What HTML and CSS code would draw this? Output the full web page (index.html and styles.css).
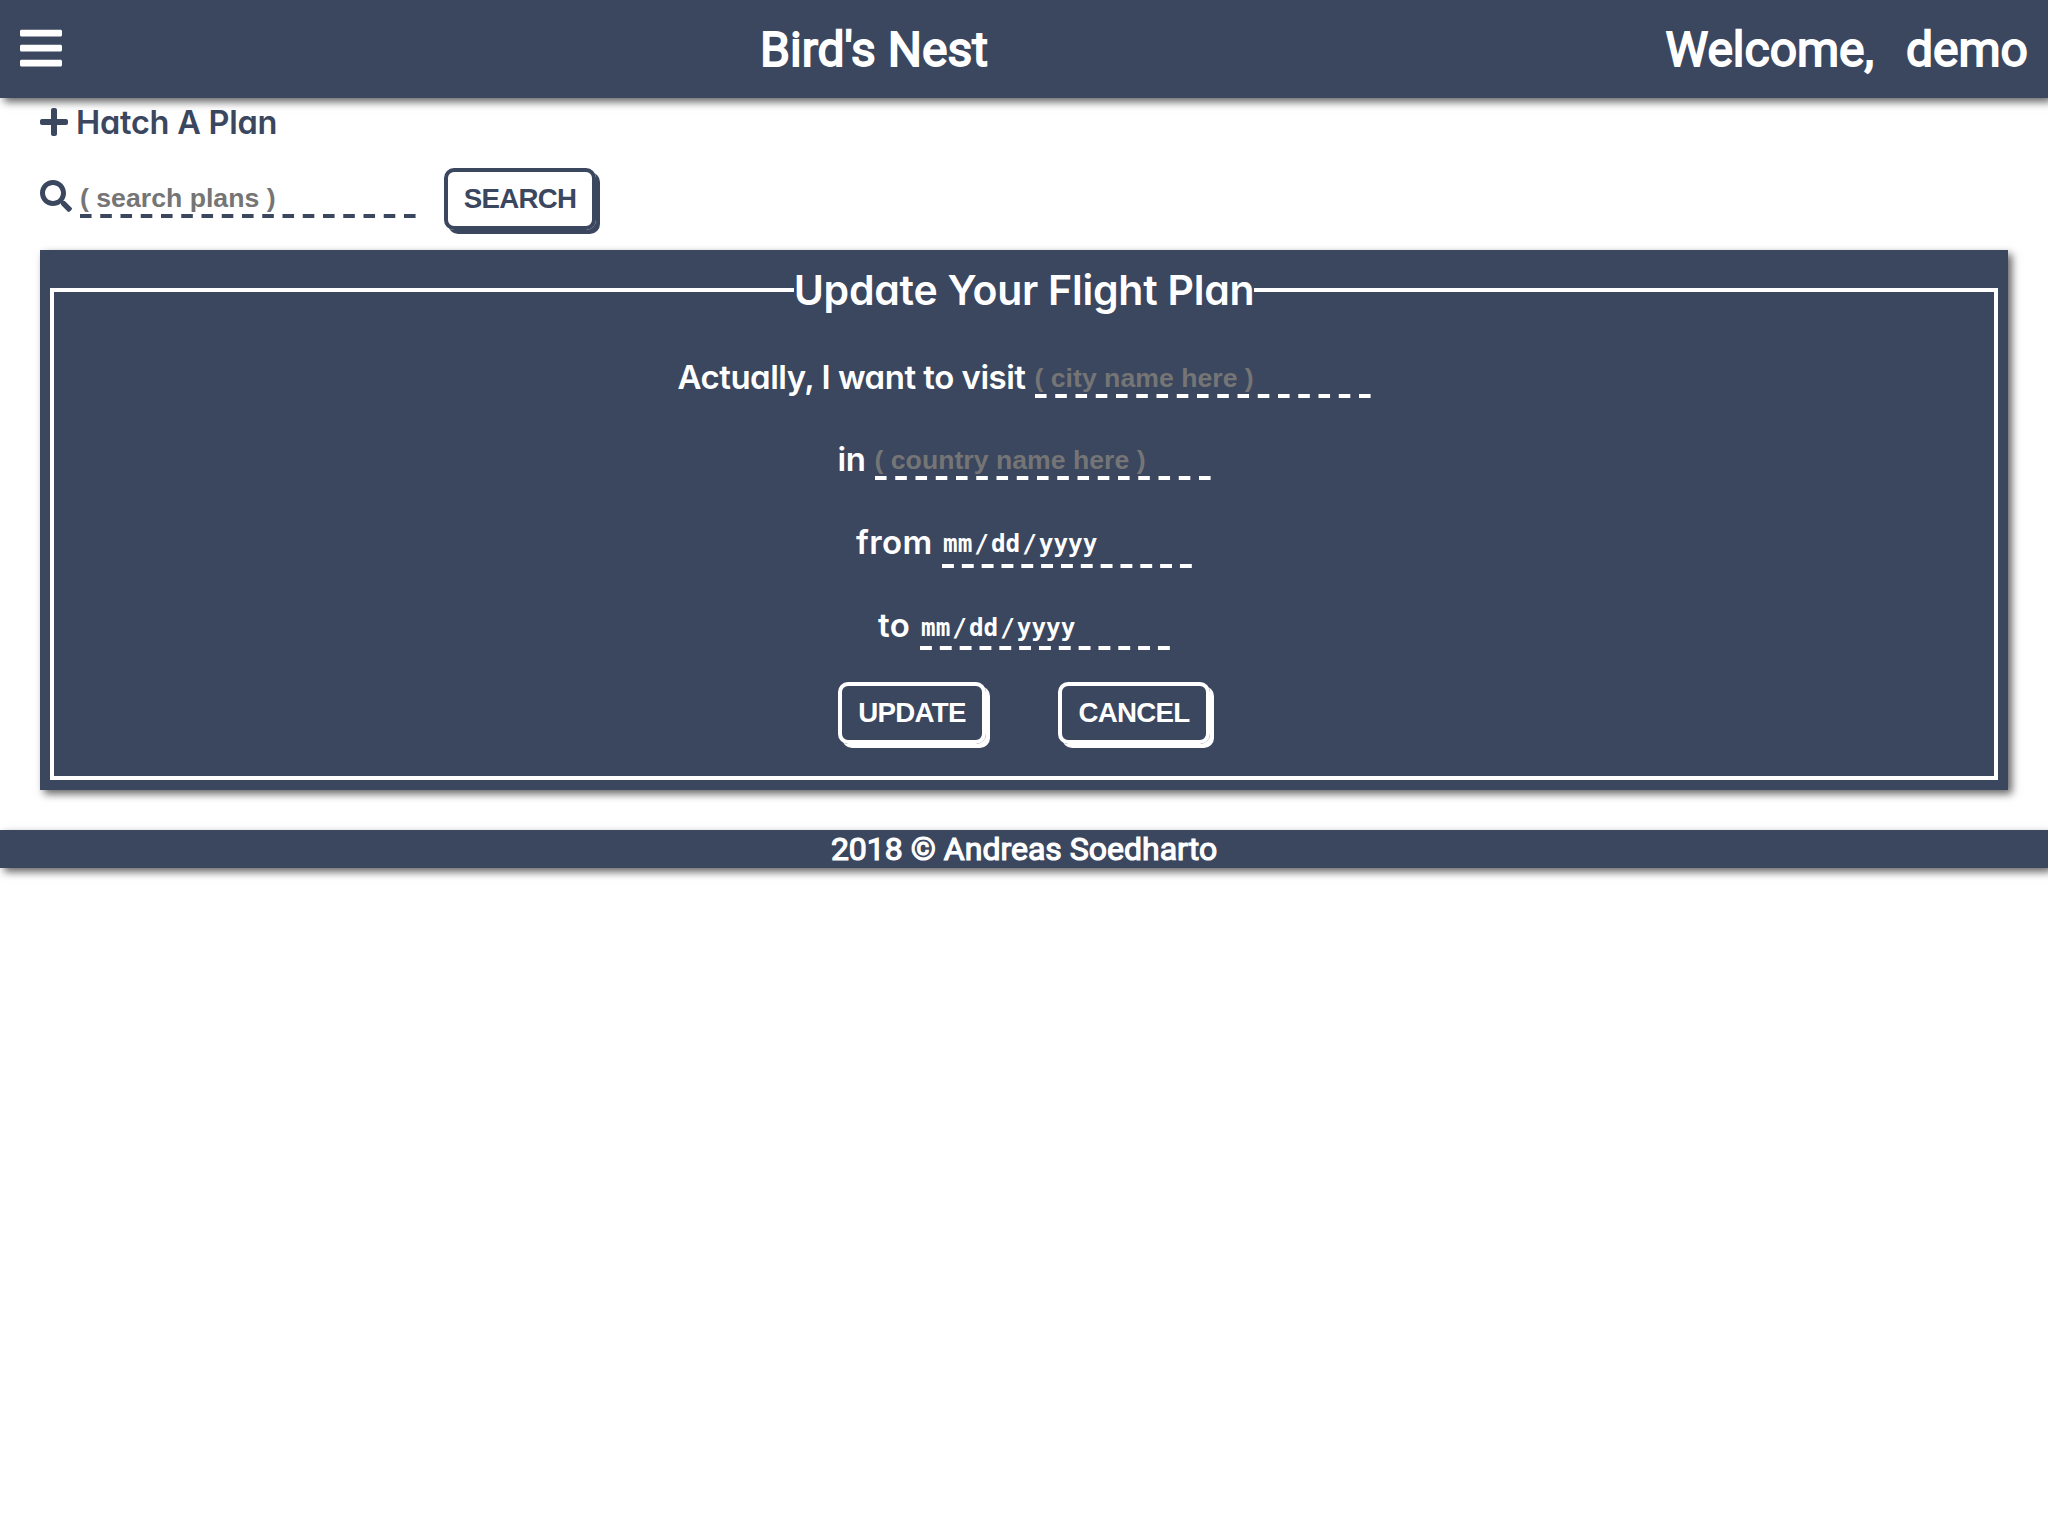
FILE: index.html
```html
<!DOCTYPE html>
<html lang="en-US">
<head>
<meta charset="utf-8">
<title>Bird's Nest</title>
<link rel="stylesheet" href="styles.css">
</head>
<body>
<header class="topbar">
  <svg class="menu" viewBox="0 0 448 512"><path d="M16 132h416c8.837 0 16-7.163 16-16V76c0-8.837-7.163-16-16-16H16C7.163 60 0 67.163 0 76v40c0 8.837 7.163 16 16 16zm0 160h416c8.837 0 16-7.163 16-16v-40c0-8.837-7.163-16-16-16H16c-8.837 0-16 7.163-16 16v40c0 8.837 7.163 16 16 16zm0 160h416c8.837 0 16-7.163 16-16v-40c0-8.837-7.163-16-16-16H16c-8.837 0-16 7.163-16 16v40c0 8.837 7.163 16 16 16z"/></svg>
  <h1 class="brand">Bird's Nest</h1>
  <div class="welcome"><span>Welcome,</span><span>demo</span></div>
</header>
<main class="content">
  <div class="hatch">
    <svg class="plus" viewBox="0 0 448 512"><path d="M416 208H272V64c0-17.67-14.33-32-32-32h-32c-17.67 0-32 14.33-32 32v144H32c-17.67 0-32 14.33-32 32v32c0 17.67 14.33 32 32 32h144v144c0 17.67 14.33 32 32 32h32c17.67 0 32-14.33 32-32V304h144c17.67 0 32-14.33 32-32v-32c0-17.67-14.33-32-32-32z"/></svg>
    <span class="hatch-text">Hatch A Plan</span>
  </div>
  <div class="search">
    <svg class="glass" viewBox="0 0 512 512"><path d="M505 442.7L405.3 343c-4.500-4.500-10.600-7-17-7H372c27.600-35.300 44-79.700 44-128C416 93.100 322.900 0 208 0S0 93.100 0 208s93.100 208 208 208c48.300 0 92.700-16.400 128-44v16.300c0 6.400 2.500 12.500 7 17l99.700 99.700c9.400 9.400 24.600 9.400 33.900 0l28.300-28.300c9.400-9.400 9.400-24.600.1-34zM208 336c-70.700 0-128-57.200-128-128 0-70.700 57.200-128 128-128 70.700 0 128 57.200 128 128 0 70.700-57.200 128-128 128z"/></svg>
    <input class="field" type="text" placeholder="( search plans )">
    <button class="btn">SEARCH</button>
  </div>
  <form class="panel">
    <fieldset class="plan">
      <legend class="legend">Update Your Flight Plan</legend>
      <div class="row row-city"><label class="label">Actually, I want to visit</label><input class="field" type="text" placeholder="( city name here )"></div>
      <div class="row row-country"><label class="label">in</label><input class="field" type="text" placeholder="( country name here )"></div>
      <div class="row row-from"><label class="label">from</label><input class="field date" type="date"></div>
      <div class="row row-to"><label class="label">to</label><input class="field date" type="date"></div>
      <div class="actions"><button class="btn btn-update" type="button">UPDATE</button><button class="btn" type="button">CANCEL</button></div>
    </fieldset>
  </form>
</main>
<footer class="footer">2018 © Andreas Soedharto</footer>
</body>
</html>
```
FILE: styles.css
```css
* { box-sizing: border-box; }
body { margin: 0; min-height: 100vh; background: #fff; color: #3b465f; }
svg { fill: currentColor; flex: none; }

.topbar {
  display: grid;
  grid-template-columns: 1fr auto 1fr;
  align-items: center;
  height: 98px;
  padding: 0 20px;
  background: #3b465f;
  color: #fff;
  box-shadow: 4px 4px 8px rgba(0, 0, 0, .6);
  font: 400 48px/56px Roboto, sans-serif;
  -webkit-text-stroke: 1.8px #fff;
}
.menu { width: 42px; height: 48px; margin-top: -2px; stroke: none; }
.brand { margin: 1px 300px 0 0; font: inherit; }
.welcome { display: flex; justify-content: flex-end; gap: 32px; margin-top: 1px; }

.content { padding: 0 40px; }
.hatch { display: flex; align-items: center; gap: 8px; height: 48px; font: 600 32.5px/48px Inter, sans-serif; font-feature-settings: "cv11"; letter-spacing: -.25px; }
.hatch-text { padding-top: 2px; }
.plus { width: 28px; height: 32px; }

.search { display: flex; align-items: flex-start; height: 104px; padding-top: 22px; }
.glass { width: 32px; height: 32px; margin: 12px 8px 0 0; }
.search .field { --dash: #3b465f; margin: 10px 28px 0 0; color: #3b465f; }

.field {
  --dash: #fff;
  --step: 20.25px;
  width: 336px;
  height: 40px;
  padding: 5px 0 5px;
  border: 0;
  border-radius: 0;
  outline: 0;
  background: linear-gradient(to right, var(--dash) 12px, transparent 12px) left bottom / var(--step) 4px repeat-x;
  color: #fff;
  font: 700 26.667px/30px "Liberation Sans", sans-serif;
}
.field::placeholder { color: #757575; }
.date { --step: 19.83px; width: 250px; height: 42px; font: 700 24.3px "DejaVu Sans Mono", monospace; padding: 0 0 4px; }
.row-from .date { height: 46px; }
.date::-webkit-calendar-picker-indicator { visibility: hidden; }
.date::-webkit-datetime-edit { padding: 0; }
.date::-webkit-datetime-edit-month-field { padding: 0 2px 0 1px; }
.date::-webkit-datetime-edit-day-field,
.date::-webkit-datetime-edit-year-field { padding: 0 2px; }

.btn {
  width: 152px;
  height: 62px;
  padding: 0 0 1px;
  border: 4px solid currentColor;
  border-radius: 10px;
  background: transparent;
  color: inherit;
  box-shadow: 4px 4px 0 currentColor;
  font: 700 27.7px/32px "Liberation Sans", sans-serif;
  letter-spacing: -.75px;
}
.btn-update { width: 148px; }

.panel { height: 540px; padding: 10px; background: #3b465f; color: #fff; box-shadow: 4px 4px 8px rgba(0, 0, 0, .6); }
.plan { height: 520px; margin: 0; padding: 0; border: 4px solid #fff; }
.legend { margin: 0 auto; padding: 0; font: 600 41px/60px Inter, sans-serif; font-feature-settings: "cv11"; letter-spacing: -.25px; }
.row { display: flex; justify-content: center; align-items: flex-end; gap: 8px; height: 82px; }
.row-city { height: 78px; }
.row-from { height: 88px; }
.label { font: 600 33px/48px Inter, sans-serif; font-feature-settings: "cv11"; margin-bottom: -3px; white-space: nowrap; }
.row-city .label { width: 349px; letter-spacing: -.5px; }
.row-country .label { width: 29px; letter-spacing: -.4px; }
.row-from .label { width: 78px; margin-bottom: 2px; letter-spacing: .4px; }
.row-to .label { width: 34px; margin-bottom: 1px; letter-spacing: .5px; }
.actions { display: flex; justify-content: center; gap: 72px; margin-top: 32px; }

.footer {
  height: 38px;
  margin-top: 40px;
  background: #3b465f;
  color: #fff;
  box-shadow: 4px 4px 8px rgba(0, 0, 0, .6);
  font: 400 32px/38px Roboto, sans-serif;
  -webkit-text-stroke: 1.2px #fff;
  text-align: center;
}
```
